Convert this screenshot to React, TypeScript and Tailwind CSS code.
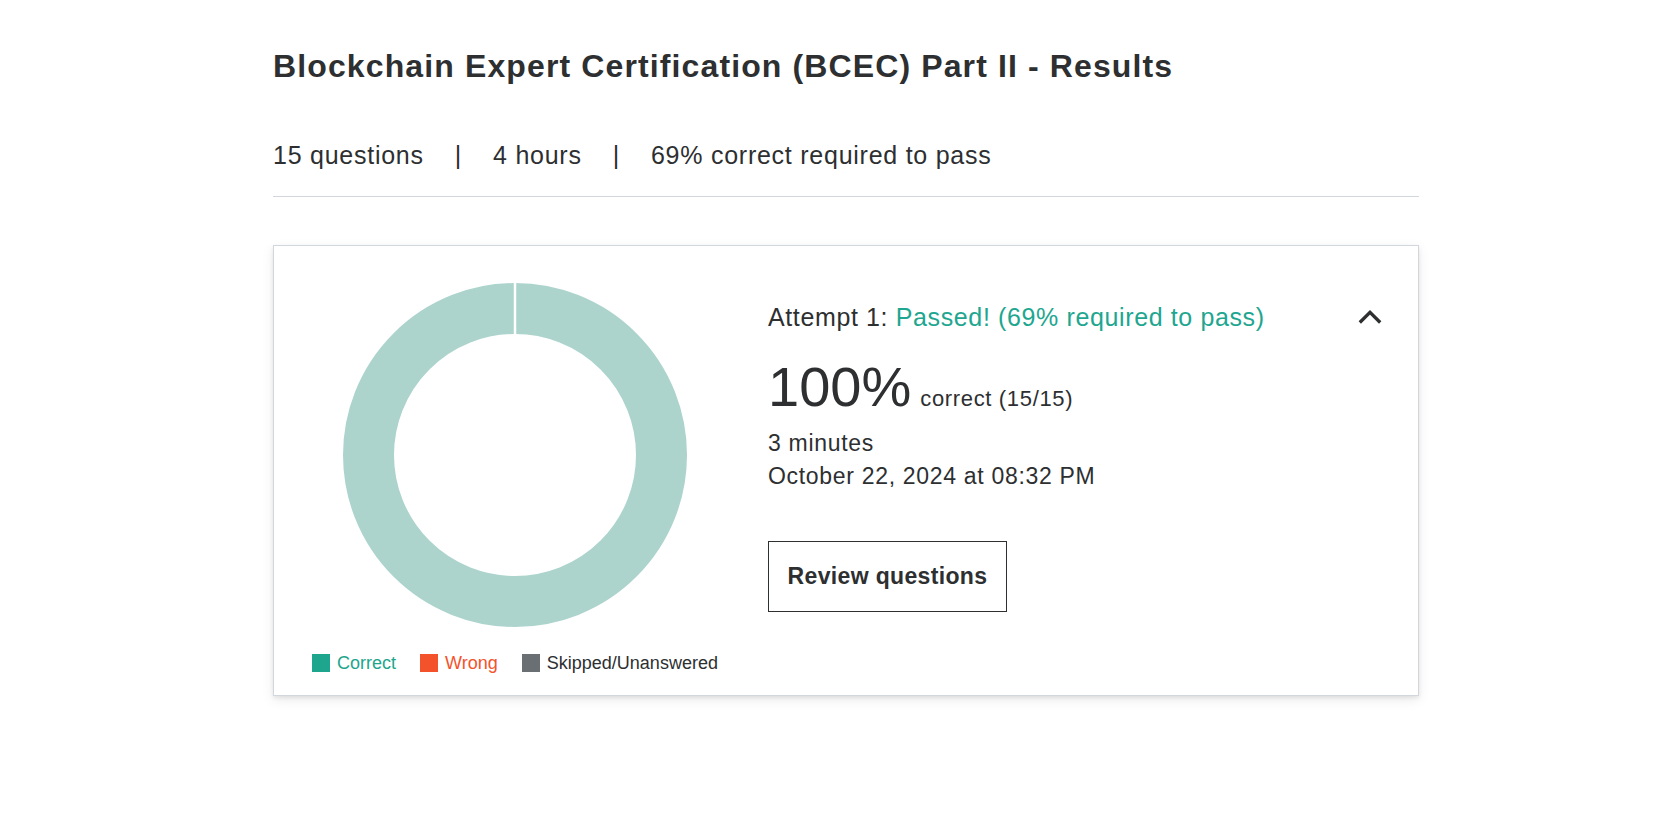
import React from 'react';

const legend = [
  { label: 'Correct', box: 'bg-[#1da58d]', text: 'text-[#1da58d]' },
  { label: 'Wrong', box: 'bg-[#f4522b]', text: 'text-[#f4522b]' },
  { label: 'Skipped/Unanswered', box: 'bg-[#6a6f73]', text: 'text-[#2d2f31]' },
];

function Donut() {
  return (
    <svg width="344" height="344" viewBox="0 0 344 344">
      <circle cx="172" cy="172" r="146.5" fill="none" stroke="#acd4cc" strokeWidth="51" />
      <line x1="172" y1="0" x2="172" y2="52" stroke="#ffffff" strokeWidth="2.5" />
    </svg>
  );
}

function ChevronUp() {
  return (
    <svg width="24" height="16" viewBox="0 0 24 16" fill="none">
      <path d="M1.8 13.5 L12 3.3 L22.2 13.5" stroke="#2d2f31" strokeWidth="3.3" strokeLinejoin="miter" />
    </svg>
  );
}

export default function App() {
  return (
    <div className="min-h-screen bg-white text-[#2d2f31] font-['Liberation_Sans',Arial,sans-serif]">
      <div className="pl-[273px] pr-[236px]">
        {/* Header */}
        <h1 className="pt-[46px] text-[32px] leading-[40px] font-bold tracking-[0.035em]">
          Blockchain Expert Certification (BCEC) Part II - Results
        </h1>

        <div className="mt-[53px] pb-[25px] border-b border-[#d1d7dc] text-[25px] leading-[32px] tracking-[0.03em] flex">
          <span>15 questions</span>
          <span className="mx-[31px]">|</span>
          <span>4 hours</span>
          <span className="mx-[31px]">|</span>
          <span>69% correct required to pass</span>
        </div>

        {/* Attempt card */}
        <div className="mt-[48px] border border-[#d1d7dc] bg-white shadow-[0_2px_4px_rgba(0,0,0,0.08),0_4px_12px_rgba(0,0,0,0.08)] flex">
          <div className="ml-[31px] w-[420px] flex flex-col items-center pt-[37px] pb-[23px]">
            <Donut />
            <div className="mt-[27px] flex items-center gap-[24px] text-[18px] leading-[18px]">
              {legend.map((item) => (
                <div key={item.label} className="flex items-center gap-[7px]">
                  <span className={`w-[18px] h-[18px] ${item.box}`}></span>
                  <span className={item.text}>{item.label}</span>
                </div>
              ))}
            </div>
          </div>

          <div className="ml-[43px] flex-1 pr-[36px] pt-[55px]">
            <div className="flex items-center justify-between h-[32px]">
              <p className="text-[25px] leading-[32px] tracking-[0.025em]">
                Attempt 1: <span className="text-[#1ea690]">Passed! (69% required to pass)</span>
              </p>
              <ChevronUp />
            </div>

            <div className="mt-[22px] flex items-baseline">
              <span className="text-[56px] leading-[64px]">100%</span>
              <span className="ml-[9px] text-[22px] tracking-[0.03em]">correct (15/15)</span>
            </div>

            <div className="mt-[8px] text-[23px] leading-[33px] tracking-[0.03em]">
              <p>3 minutes</p>
              <p>October 22, 2024 at 08:32 PM</p>
            </div>

            <button className="mt-[48px] w-[239px] h-[71px] border border-[#2d2f31] bg-white text-[23px] font-bold tracking-[0.015em] flex items-center justify-center">
              Review questions
            </button>
          </div>
        </div>
      </div>
    </div>
  );
}
